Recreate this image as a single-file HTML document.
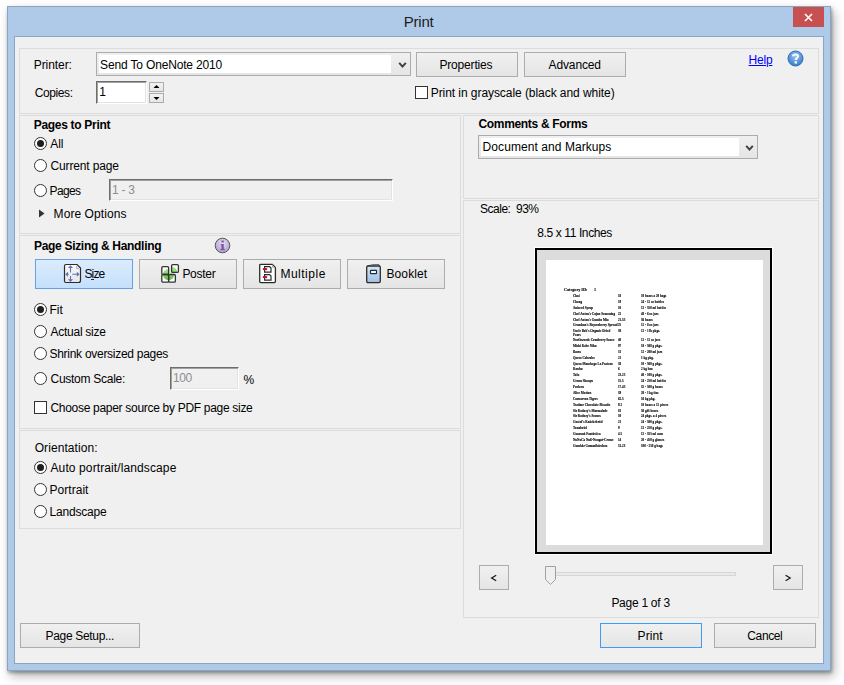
<!DOCTYPE html>
<html><head><meta charset="utf-8">
<style>
*{box-sizing:border-box;margin:0;padding:0}
html,body{width:844px;height:685px;overflow:hidden;background:#fff}
body{position:relative;font-family:"Liberation Sans",sans-serif;font-size:12px;color:#000}
.a{position:absolute}
.t{position:absolute;white-space:pre;line-height:14px;font-size:12px;color:#000}
.b{font-weight:bold}
.win{position:absolute;left:7px;top:6px;width:824px;height:665px;background:#aecae8;border:1px solid #8aa5c4;box-shadow:1px 2px 3px rgba(0,0,0,.3),3px 5px 10px rgba(0,0,0,.3)}
.client{position:absolute;left:14px;top:36px;width:810px;height:628px;background:#f0f0f0;border:1px solid #8aa5c4}
.grp{position:absolute;border:1px solid #dcdcdc}
.btn{position:absolute;border:1px solid #acacac;background:linear-gradient(#f0f0f0,#e5e5e5)}
.radio{position:absolute;width:13px;height:13px;border-radius:50%;border:1px solid #333;background:#fff}
.radio.on::after{content:"";position:absolute;left:2px;top:2px;width:7px;height:7px;border-radius:50%;background:#1e1e1e}
.chk{position:absolute;width:13px;height:13px;border:1px solid #333;background:#fff}
.pt{position:absolute;white-space:pre;font-family:"Liberation Serif",serif;font-weight:bold;color:#000;transform-origin:0 0;-webkit-text-stroke:0.12px #000}
.tb{position:absolute;border-top:1px solid #6d6d6d;border-left:1px solid #6d6d6d;border-right:1px solid #fff;border-bottom:1px solid #fff;box-shadow:inset 1px 1px 0 #a0a0a0,inset -1px -1px 0 #e3e3e3}
</style></head>
<body>
<div class="win"></div>
<div class="a" style="left:793px;top:7px;width:31px;height:20px;background:#c75050"></div>
<svg class="a" style="left:793px;top:7px" width="31" height="20"><path d="M12 7 L19 14 M19 7 L12 14" stroke="#fff" stroke-width="1.6"/></svg>
<div class="t" style="left:403.8px;top:13px;font-size:15px;line-height:18px;color:#1b1b1b;letter-spacing:-0.23px">Print</div>
<div class="client"></div>

<!-- groups -->
<div class="grp" style="left:19px;top:48px;width:800px;height:66px"></div>
<div class="grp" style="left:19px;top:115px;width:442px;height:119px"></div>
<div class="grp" style="left:19px;top:235px;width:442px;height:194px"></div>
<div class="grp" style="left:19px;top:430px;width:442px;height:99px"></div>
<div class="grp" style="left:463px;top:115px;width:356px;height:84px"></div>
<div class="grp" style="left:463px;top:200px;width:356px;height:418px"></div>

<!-- printer row -->
<div class="t" style="left:33.7px;top:58px;letter-spacing:-0.06px">Printer:</div>
<div class="a" style="left:96px;top:52px;width:315px;height:24px;border:1px solid #acacac;background:linear-gradient(#f0f0f0,#e5e5e5)"></div>
<div class="a" style="left:99px;top:55px;width:292px;height:18px;background:#fff"></div>
<div class="t" style="left:100.1px;top:58px;letter-spacing:-0.16px">Send To OneNote 2010</div>
<svg class="a" style="left:398px;top:62px" width="9" height="7"><path d="M1.2 0.9 L4.5 4.6 L7.8 0.9" fill="none" stroke="#404040" stroke-width="2"/></svg>
<div class="btn" style="left:416px;top:52px;width:102px;height:25px"></div>
<div class="t" style="left:439.4px;top:58px;letter-spacing:-0.17px">Properties</div>
<div class="btn" style="left:524px;top:52px;width:102px;height:25px"></div>
<div class="t" style="left:548.6px;top:58px;letter-spacing:-0.14px">Advanced</div>
<div class="t" style="left:748.6px;top:53px;color:#0000ff;text-decoration:underline;letter-spacing:-0.23px">Help</div>
<svg class="a" style="left:787px;top:50px" width="17" height="17"><defs><radialGradient id="hg" cx="50%" cy="35%" r="60%"><stop offset="0" stop-color="#9cc8f0"/><stop offset="1" stop-color="#3b7fcc"/></radialGradient></defs><circle cx="8.5" cy="8.5" r="7.5" fill="url(#hg)" stroke="#2f6db5" stroke-width="1"/><path d="M6 6.3 C6 3.8 11 3.8 11 6.3 C11 8 8.8 8 8.8 10" fill="none" stroke="#fff" stroke-width="2"/><rect x="7.6" y="11.3" width="2.4" height="2.2" fill="#fff"/></svg>

<div class="t" style="left:34.7px;top:86px;letter-spacing:-0.40px">Copies:</div>
<div class="tb" style="left:96px;top:81px;width:51px;height:23px;background:#fff"></div>
<div class="t" style="left:99.3px;top:85px;letter-spacing:0.00px">1</div>
<div class="btn" style="left:149px;top:82px;width:15px;height:10px;background:linear-gradient(#f2f2f2,#e6e6e6)"></div>
<div class="btn" style="left:149px;top:93px;width:15px;height:10px;background:linear-gradient(#f2f2f2,#e6e6e6)"></div>
<svg class="a" style="left:149px;top:82px" width="15" height="21"><path d="M4.5 6 L7.5 3 L10.5 6Z M4.5 15 L7.5 18 L10.5 15Z" fill="#000"/></svg>
<div class="chk" style="left:415px;top:86px"></div>
<div class="t" style="left:430.7px;top:86px;letter-spacing:-0.06px">Print in grayscale (black and white)</div>

<!-- pages to print -->
<div class="t b" style="left:33.7px;top:118px;letter-spacing:-0.30px">Pages to Print</div>
<div class="radio on" style="left:34px;top:137px"></div>
<div class="t" style="left:50.2px;top:137px;letter-spacing:0.00px">All</div>
<div class="radio" style="left:34px;top:159px"></div>
<div class="t" style="left:50.5px;top:159px;letter-spacing:-0.15px">Current page</div>
<div class="radio" style="left:34px;top:184px"></div>
<div class="t" style="left:49.5px;top:184px;letter-spacing:-0.62px">Pages</div>
<div class="tb" style="left:109px;top:179px;width:284px;height:22px;background:#f0f0f0"></div>
<div class="t" style="left:112px;top:183px;color:#8d8d8d;letter-spacing:-0.3px">1 - 3</div>
<svg class="a" style="left:38px;top:209px" width="8" height="9"><path d="M1 0.5 L6.5 4.5 L1 8.5Z" fill="#333"/></svg>
<div class="t" style="left:53.6px;top:207px;letter-spacing:0.07px">More Options</div>

<!-- page sizing -->
<div class="t b" style="left:34.0px;top:239px;letter-spacing:-0.31px">Page Sizing &amp; Handling</div>
<svg class="a" style="left:214px;top:237px" width="17" height="17"><defs><radialGradient id="ig" cx="50%" cy="35%" r="60%"><stop offset="0" stop-color="#e6def2"/><stop offset="1" stop-color="#b3a2d2"/></radialGradient></defs><circle cx="8.5" cy="8.5" r="7.3" fill="url(#ig)" stroke="#555" stroke-width="1"/><rect x="7.4" y="3.5" width="2.4" height="2" fill="#7a5a9e"/><path d="M6.6 7 H9.8 V12 H10.8 V13.3 H6.4 V12 H7.4 V8.2 H6.6Z" fill="#7a5a9e"/></svg>

<div class="a" style="left:35px;top:259px;width:98px;height:30px;border:1px solid #62a2e4;background:linear-gradient(#dcecfc,#c4e0fc)"></div>
<svg class="a" style="left:63px;top:263px" width="20" height="21"><defs><linearGradient id="sg" x1="0" y1="0" x2="0" y2="1"><stop offset="0" stop-color="#fafafa"/><stop offset="1" stop-color="#e6e6e6"/></linearGradient></defs><path d="M1.5 3 Q1.5 1.5 3 1.5 H14 L17.5 5 V17.5 Q17.5 19.5 15.5 19.5 H3 Q1.5 19.5 1.5 18 Z" fill="url(#sg)" stroke="#2b2b2b" stroke-width="1.2"/><path d="M13.6 3.2 V5.6 H16" fill="none" stroke="#999" stroke-width=".8"/><g stroke="#5b75b6" stroke-width="1.1" fill="#5b75b6"><path d="M7.5 4 V9.5 M7.5 13 V18 M3.5 11.3 H5.8 M9.2 11.3 H15" fill="none"/><path d="M7.5 2.2 L5 5 H10Z M7.5 19 L5 16.2 H10Z M2.2 11.3 L5 8.8 V13.8Z M16.6 11.3 L13.8 8.8 V13.8Z" stroke="none"/></g></svg>
<div class="t" style="left:84.4px;top:267px;letter-spacing:-0.83px">Size</div>

<div class="a" style="left:91px;top:279px;width:3px;height:1px;background:#222"></div>
<div class="btn" style="left:139px;top:259px;width:98px;height:30px"></div>
<svg class="a" style="left:160px;top:263px" width="20" height="21"><defs><linearGradient id="pg" x1="0" y1="0" x2="0" y2="1"><stop offset="0" stop-color="#a8e88a"/><stop offset="1" stop-color="#5cc23a"/></linearGradient><clipPath id="pc1"><rect x="1.8" y="3.6" width="6.8" height="7.9"/><rect x="1.8" y="11.5" width="6.8" height="7.7"/><rect x="8.6" y="11.5" width="6.8" height="7.7"/></clipPath><clipPath id="pc2"><rect x="11.6" y="1.6" width="6.8" height="7.8"/></clipPath></defs><g fill="#fff"><rect x="1.8" y="3.6" width="6.8" height="15.6"/><rect x="8.6" y="11.5" width="6.8" height="7.7"/><rect x="11.6" y="1.6" width="6.8" height="7.8"/></g><circle cx="8.6" cy="11.5" r="5.6" fill="url(#pg)" clip-path="url(#pc1)"/><circle cx="11.6" cy="9.4" r="5.6" fill="url(#pg)" clip-path="url(#pc2)"/><g fill="none" stroke="#333" stroke-width="1.3"><rect x="1.8" y="3.6" width="6.8" height="7.9" rx="1.2"/><rect x="1.8" y="11.5" width="6.8" height="7.7" rx="1.2"/><rect x="8.6" y="11.5" width="6.8" height="7.7" rx="1.2"/><rect x="11.6" y="1.6" width="6.8" height="7.8" rx="1.2"/></g></svg>
<div class="t" style="left:182.4px;top:267px;letter-spacing:-0.28px">Poster</div>

<div class="btn" style="left:243px;top:259px;width:98px;height:30px"></div>
<svg class="a" style="left:258px;top:263px" width="20" height="21"><path d="M1.7 2.5 Q1.7 1.3 3 1.3 H14.3 L17.4 4.4 V18.6 Q17.4 19.6 16.2 19.6 H3 Q1.7 19.6 1.7 18.4 Z" fill="#fff" stroke="#2b2b2b" stroke-width="1.3"/><path d="M14.5 1.6 V4.4 H17.2" fill="none" stroke="#aaa" stroke-width=".8"/><g fill="#fff" stroke="#2b2b2b" stroke-width="1.2"><path d="M6.6 3.6 H11.6 L13 5 V9.2 H6.6 Z"/><path d="M6.6 11.6 H11.6 L13 13 V17.2 H6.6 Z"/></g><rect x="4.9" y="5.1" width="4.2" height="2" fill="#c8102a"/><rect x="4.9" y="13.1" width="4.2" height="2" fill="#c8102a"/></svg>
<div class="t" style="left:280.4px;top:267px;letter-spacing:0.51px">Multiple</div>

<div class="btn" style="left:347px;top:259px;width:98px;height:30px"></div>
<svg class="a" style="left:365px;top:263px" width="17" height="21"><defs><linearGradient id="bg" x1="0" y1="0" x2="0" y2="1"><stop offset="0" stop-color="#d3e7f9"/><stop offset=".45" stop-color="#bcd6ef"/><stop offset="1" stop-color="#9ebfe0"/></linearGradient></defs><path d="M2.5 3 Q7 1 14 1.6 L14.6 3" fill="#ddd" stroke="#666" stroke-width="1"/><rect x="1.7" y="3" width="13.6" height="16.6" rx="1.3" fill="url(#bg)" stroke="#2b2b2b" stroke-width="1.3"/><rect x="5.5" y="7.3" width="6" height="3.4" rx=".5" fill="#fff" stroke="#1e2a3a" stroke-width="1.2"/></svg>
<div class="t" style="left:386.4px;top:267px;letter-spacing:0.13px">Booklet</div>

<div class="radio on" style="left:34px;top:303px"></div>
<div class="t" style="left:49.5px;top:303px;letter-spacing:0.00px">Fit</div>
<div class="radio" style="left:34px;top:325px"></div>
<div class="t" style="left:50.5px;top:325px;letter-spacing:-0.26px">Actual size</div>
<div class="radio" style="left:34px;top:347px"></div>
<div class="t" style="left:49.5px;top:347px;letter-spacing:-0.28px">Shrink oversized pages</div>
<div class="radio" style="left:34px;top:372px"></div>
<div class="t" style="left:50.5px;top:372px;letter-spacing:-0.27px">Custom Scale:</div>
<div class="tb" style="left:170px;top:367px;width:69px;height:23px;background:#f0f0f0"></div>
<div class="t" style="left:173px;top:371px;color:#8d8d8d;letter-spacing:-0.4px">100</div>
<div class="t" style="left:243.6px;top:373px;letter-spacing:0.00px">%</div>
<div class="chk" style="left:34px;top:401px"></div>
<div class="t" style="left:50.5px;top:401px;letter-spacing:-0.30px">Choose paper source by PDF page size</div>

<!-- orientation -->
<div class="t" style="left:34.7px;top:441px;letter-spacing:0.07px">Orientation:</div>
<div class="radio on" style="left:34px;top:461px"></div>
<div class="t" style="left:50.5px;top:461px;letter-spacing:0.11px">Auto portrait/landscape</div>
<div class="radio" style="left:34px;top:483px"></div>
<div class="t" style="left:49.5px;top:483px;letter-spacing:0.04px">Portrait</div>
<div class="radio" style="left:34px;top:505px"></div>
<div class="t" style="left:49.5px;top:505px;letter-spacing:-0.19px">Landscape</div>

<!-- comments -->
<div class="t b" style="left:478.4px;top:117px;letter-spacing:-0.31px">Comments &amp; Forms</div>
<div class="a" style="left:478px;top:135px;width:280px;height:24px;border:1px solid #acacac;background:linear-gradient(#f0f0f0,#e5e5e5)"></div>
<div class="a" style="left:481px;top:138px;width:258px;height:18px;background:#fff"></div>
<div class="t" style="left:482.6px;top:140px;letter-spacing:0.07px">Document and Markups</div>
<svg class="a" style="left:745px;top:145px" width="9" height="7"><path d="M1.2 0.9 L4.5 4.6 L7.8 0.9" fill="none" stroke="#404040" stroke-width="2"/></svg>

<!-- preview -->
<div class="t" style="left:480.1px;top:202px;letter-spacing:-0.51px">Scale:  93%</div>
<div class="t" style="left:537.2px;top:226px;letter-spacing:-0.38px">8.5 x 11 Inches</div>
<div class="a" style="left:534px;top:247px;width:239px;height:308px;border:1px solid #fff"></div>
<div class="a" style="left:535px;top:248px;width:237px;height:306px;border:2px solid #000;background:#dcdcdc"></div>
<div class="a" style="left:546px;top:260px;width:217px;height:285px;background:#fff"></div>
<div id="pv" class="a" style="left:546px;top:260px;width:217px;height:286px;will-change:transform">
<div class="pt" style="left:18.3px;top:28.13px;font-size:4.6px;line-height:4.6px;transform:scaleX(0.9)">Category ID:</div>
<div class="pt" style="left:48.1px;top:28.13px;font-size:4.6px;line-height:4.6px;transform:scaleX(0.9)">1</div>
<div class="pt" style="left:27.1px;top:34.06px;font-size:4.2px;line-height:4.2px;transform:scaleX(0.77)">Chai</div>
<div class="pt" style="left:72.4px;top:34.06px;font-size:4.2px;line-height:4.2px;transform:scaleX(0.77)">18</div>
<div class="pt" style="left:94.6px;top:34.06px;font-size:4.2px;line-height:4.2px;transform:scaleX(0.77)">10 boxes x 20 bags</div>
<div class="pt" style="left:27.1px;top:40.16px;font-size:4.2px;line-height:4.2px;transform:scaleX(0.77)">Chang</div>
<div class="pt" style="left:72.4px;top:40.16px;font-size:4.2px;line-height:4.2px;transform:scaleX(0.77)">19</div>
<div class="pt" style="left:94.6px;top:40.16px;font-size:4.2px;line-height:4.2px;transform:scaleX(0.77)">24 - 12 oz bottles</div>
<div class="pt" style="left:27.1px;top:46.16px;font-size:4.2px;line-height:4.2px;transform:scaleX(0.77)">Aniseed Syrup</div>
<div class="pt" style="left:72.4px;top:46.16px;font-size:4.2px;line-height:4.2px;transform:scaleX(0.77)">10</div>
<div class="pt" style="left:94.6px;top:46.16px;font-size:4.2px;line-height:4.2px;transform:scaleX(0.77)">12 - 550 ml bottles</div>
<div class="pt" style="left:27.1px;top:52.06px;font-size:4.2px;line-height:4.2px;transform:scaleX(0.77)">Chef Anton&#x27;s Cajun Seasoning</div>
<div class="pt" style="left:72.4px;top:52.06px;font-size:4.2px;line-height:4.2px;transform:scaleX(0.77)">22</div>
<div class="pt" style="left:94.6px;top:52.06px;font-size:4.2px;line-height:4.2px;transform:scaleX(0.77)">48 - 6 oz jars</div>
<div class="pt" style="left:27.1px;top:57.96px;font-size:4.2px;line-height:4.2px;transform:scaleX(0.77)">Chef Anton&#x27;s Gumbo Mix</div>
<div class="pt" style="left:72.4px;top:57.96px;font-size:4.2px;line-height:4.2px;transform:scaleX(0.77)">21.35</div>
<div class="pt" style="left:94.6px;top:57.96px;font-size:4.2px;line-height:4.2px;transform:scaleX(0.77)">36 boxes</div>
<div class="pt" style="left:27.1px;top:62.86px;font-size:4.2px;line-height:4.2px;transform:scaleX(0.77)">Grandma&#x27;s Boysenberry Spread</div>
<div class="pt" style="left:72.4px;top:62.86px;font-size:4.2px;line-height:4.2px;transform:scaleX(0.77)">25</div>
<div class="pt" style="left:94.6px;top:62.86px;font-size:4.2px;line-height:4.2px;transform:scaleX(0.77)">12 - 8 oz jars</div>
<div class="pt" style="left:27.1px;top:69.06px;font-size:4.2px;line-height:4.2px;transform:scaleX(0.77)">Uncle Bob&#x27;s Organic Dried</div>
<div class="pt" style="left:72.4px;top:69.06px;font-size:4.2px;line-height:4.2px;transform:scaleX(0.77)">30</div>
<div class="pt" style="left:94.6px;top:69.06px;font-size:4.2px;line-height:4.2px;transform:scaleX(0.77)">12 - 1 lb pkgs.</div>
<div class="pt" style="left:27.1px;top:73.06px;font-size:4.2px;line-height:4.2px;transform:scaleX(0.77)">Pears</div>
<div class="pt" style="left:27.1px;top:78.16px;font-size:4.2px;line-height:4.2px;transform:scaleX(0.77)">Northwoods Cranberry Sauce</div>
<div class="pt" style="left:72.4px;top:78.16px;font-size:4.2px;line-height:4.2px;transform:scaleX(0.77)">40</div>
<div class="pt" style="left:94.6px;top:78.16px;font-size:4.2px;line-height:4.2px;transform:scaleX(0.77)">12 - 12 oz jars</div>
<div class="pt" style="left:27.1px;top:84.26px;font-size:4.2px;line-height:4.2px;transform:scaleX(0.77)">Mishi Kobe Niku</div>
<div class="pt" style="left:72.4px;top:84.26px;font-size:4.2px;line-height:4.2px;transform:scaleX(0.77)">97</div>
<div class="pt" style="left:94.6px;top:84.26px;font-size:4.2px;line-height:4.2px;transform:scaleX(0.77)">18 - 500 g pkgs.</div>
<div class="pt" style="left:27.1px;top:90.06px;font-size:4.2px;line-height:4.2px;transform:scaleX(0.77)">Ikura</div>
<div class="pt" style="left:72.4px;top:90.06px;font-size:4.2px;line-height:4.2px;transform:scaleX(0.77)">31</div>
<div class="pt" style="left:94.6px;top:90.06px;font-size:4.2px;line-height:4.2px;transform:scaleX(0.77)">12 - 200 ml jars</div>
<div class="pt" style="left:27.1px;top:96.16px;font-size:4.2px;line-height:4.2px;transform:scaleX(0.77)">Queso Cabrales</div>
<div class="pt" style="left:72.4px;top:96.16px;font-size:4.2px;line-height:4.2px;transform:scaleX(0.77)">21</div>
<div class="pt" style="left:94.6px;top:96.16px;font-size:4.2px;line-height:4.2px;transform:scaleX(0.77)">1 kg pkg.</div>
<div class="pt" style="left:27.1px;top:101.96px;font-size:4.2px;line-height:4.2px;transform:scaleX(0.77)">Queso Manchego La Pastora</div>
<div class="pt" style="left:72.4px;top:101.96px;font-size:4.2px;line-height:4.2px;transform:scaleX(0.77)">38</div>
<div class="pt" style="left:94.6px;top:101.96px;font-size:4.2px;line-height:4.2px;transform:scaleX(0.77)">10 - 500 g pkgs.</div>
<div class="pt" style="left:27.1px;top:106.76px;font-size:4.2px;line-height:4.2px;transform:scaleX(0.77)">Konbu</div>
<div class="pt" style="left:72.4px;top:106.76px;font-size:4.2px;line-height:4.2px;transform:scaleX(0.77)">6</div>
<div class="pt" style="left:94.6px;top:106.76px;font-size:4.2px;line-height:4.2px;transform:scaleX(0.77)">2 kg box</div>
<div class="pt" style="left:27.1px;top:113.26px;font-size:4.2px;line-height:4.2px;transform:scaleX(0.77)">Tofu</div>
<div class="pt" style="left:72.4px;top:113.26px;font-size:4.2px;line-height:4.2px;transform:scaleX(0.77)">23.25</div>
<div class="pt" style="left:94.6px;top:113.26px;font-size:4.2px;line-height:4.2px;transform:scaleX(0.77)">40 - 100 g pkgs.</div>
<div class="pt" style="left:27.1px;top:119.26px;font-size:4.2px;line-height:4.2px;transform:scaleX(0.77)">Genen Shouyu</div>
<div class="pt" style="left:72.4px;top:119.26px;font-size:4.2px;line-height:4.2px;transform:scaleX(0.77)">15.5</div>
<div class="pt" style="left:94.6px;top:119.26px;font-size:4.2px;line-height:4.2px;transform:scaleX(0.77)">24 - 250 ml bottles</div>
<div class="pt" style="left:27.1px;top:125.26px;font-size:4.2px;line-height:4.2px;transform:scaleX(0.77)">Pavlova</div>
<div class="pt" style="left:72.4px;top:125.26px;font-size:4.2px;line-height:4.2px;transform:scaleX(0.77)">17.45</div>
<div class="pt" style="left:94.6px;top:125.26px;font-size:4.2px;line-height:4.2px;transform:scaleX(0.77)">32 - 500 g boxes</div>
<div class="pt" style="left:27.1px;top:131.36px;font-size:4.2px;line-height:4.2px;transform:scaleX(0.77)">Alice Mutton</div>
<div class="pt" style="left:72.4px;top:131.36px;font-size:4.2px;line-height:4.2px;transform:scaleX(0.77)">39</div>
<div class="pt" style="left:94.6px;top:131.36px;font-size:4.2px;line-height:4.2px;transform:scaleX(0.77)">20 - 1 kg tins</div>
<div class="pt" style="left:27.1px;top:137.16px;font-size:4.2px;line-height:4.2px;transform:scaleX(0.77)">Carnarvon Tigers</div>
<div class="pt" style="left:72.4px;top:137.16px;font-size:4.2px;line-height:4.2px;transform:scaleX(0.77)">62.5</div>
<div class="pt" style="left:94.6px;top:137.16px;font-size:4.2px;line-height:4.2px;transform:scaleX(0.77)">16 kg pkg.</div>
<div class="pt" style="left:27.1px;top:143.06px;font-size:4.2px;line-height:4.2px;transform:scaleX(0.77)">Teatime Chocolate Biscuits</div>
<div class="pt" style="left:72.4px;top:143.06px;font-size:4.2px;line-height:4.2px;transform:scaleX(0.77)">9.2</div>
<div class="pt" style="left:94.6px;top:143.06px;font-size:4.2px;line-height:4.2px;transform:scaleX(0.77)">10 boxes x 12 pieces</div>
<div class="pt" style="left:27.1px;top:149.06px;font-size:4.2px;line-height:4.2px;transform:scaleX(0.77)">Sir Rodney&#x27;s Marmalade</div>
<div class="pt" style="left:72.4px;top:149.06px;font-size:4.2px;line-height:4.2px;transform:scaleX(0.77)">81</div>
<div class="pt" style="left:94.6px;top:149.06px;font-size:4.2px;line-height:4.2px;transform:scaleX(0.77)">30 gift boxes</div>
<div class="pt" style="left:27.1px;top:154.26px;font-size:4.2px;line-height:4.2px;transform:scaleX(0.77)">Sir Rodney&#x27;s Scones</div>
<div class="pt" style="left:72.4px;top:154.26px;font-size:4.2px;line-height:4.2px;transform:scaleX(0.77)">10</div>
<div class="pt" style="left:94.6px;top:154.26px;font-size:4.2px;line-height:4.2px;transform:scaleX(0.77)">24 pkgs. x 4 pieces</div>
<div class="pt" style="left:27.1px;top:160.26px;font-size:4.2px;line-height:4.2px;transform:scaleX(0.77)">Gustaf&#x27;s Knäckebröd</div>
<div class="pt" style="left:72.4px;top:160.26px;font-size:4.2px;line-height:4.2px;transform:scaleX(0.77)">21</div>
<div class="pt" style="left:94.6px;top:160.26px;font-size:4.2px;line-height:4.2px;transform:scaleX(0.77)">24 - 500 g pkgs.</div>
<div class="pt" style="left:27.1px;top:166.16px;font-size:4.2px;line-height:4.2px;transform:scaleX(0.77)">Tunnbröd</div>
<div class="pt" style="left:72.4px;top:166.16px;font-size:4.2px;line-height:4.2px;transform:scaleX(0.77)">9</div>
<div class="pt" style="left:94.6px;top:166.16px;font-size:4.2px;line-height:4.2px;transform:scaleX(0.77)">12 - 250 g pkgs.</div>
<div class="pt" style="left:27.1px;top:172.26px;font-size:4.2px;line-height:4.2px;transform:scaleX(0.77)">Guaraná Fantástica</div>
<div class="pt" style="left:72.4px;top:172.26px;font-size:4.2px;line-height:4.2px;transform:scaleX(0.77)">4.5</div>
<div class="pt" style="left:94.6px;top:172.26px;font-size:4.2px;line-height:4.2px;transform:scaleX(0.77)">12 - 355 ml cans</div>
<div class="pt" style="left:27.1px;top:178.26px;font-size:4.2px;line-height:4.2px;transform:scaleX(0.77)">NuNuCa Nuß-Nougat-Creme</div>
<div class="pt" style="left:72.4px;top:178.26px;font-size:4.2px;line-height:4.2px;transform:scaleX(0.77)">14</div>
<div class="pt" style="left:94.6px;top:178.26px;font-size:4.2px;line-height:4.2px;transform:scaleX(0.77)">20 - 450 g glasses</div>
<div class="pt" style="left:27.1px;top:184.26px;font-size:4.2px;line-height:4.2px;transform:scaleX(0.77)">Gumbär Gummibärchen</div>
<div class="pt" style="left:72.4px;top:184.26px;font-size:4.2px;line-height:4.2px;transform:scaleX(0.77)">31.23</div>
<div class="pt" style="left:94.6px;top:184.26px;font-size:4.2px;line-height:4.2px;transform:scaleX(0.77)">100 - 250 g bags</div>
</div>

<div class="btn" style="left:479px;top:565px;width:30px;height:25px"></div>
<svg class="a" style="left:489px;top:573px" width="9" height="10"><path d="M7.2 2.3 L2.6 5 L7.2 7.7" fill="none" stroke="#111" stroke-width="1.15"/></svg>
<div class="a" style="left:546px;top:572px;width:190px;height:4px;background:#e7eae7;border:1px solid #d6d6d6"></div>
<svg class="a" style="left:545px;top:566px" width="12" height="20"><path d="M0.5 0.5 H10.5 V13.5 L5.5 18.5 L0.5 13.5Z" fill="#efefef" stroke="#a0a0a0" stroke-width="1"/></svg>
<div class="btn" style="left:773px;top:565px;width:30px;height:25px"></div>
<svg class="a" style="left:783px;top:573px" width="9" height="10"><path d="M2.6 2.3 L7.2 5 L2.6 7.7" fill="none" stroke="#111" stroke-width="1.15"/></svg>
<div class="t" style="left:611.4px;top:596px;letter-spacing:-0.27px">Page 1 of 3</div>

<!-- bottom buttons -->
<div class="btn" style="left:20px;top:623px;width:120px;height:25px"></div>
<div class="t" style="left:45.6px;top:629px;letter-spacing:-0.33px">Page Setup...</div>
<div class="btn" style="left:600px;top:623px;width:102px;height:25px;border-color:#3c9df5"></div>
<div class="t" style="left:637.6px;top:629px;letter-spacing:0.05px">Print</div>
<div class="btn" style="left:714px;top:623px;width:102px;height:25px"></div>
<div class="t" style="left:747.3px;top:629px;letter-spacing:-0.38px">Cancel</div>
</body></html>
